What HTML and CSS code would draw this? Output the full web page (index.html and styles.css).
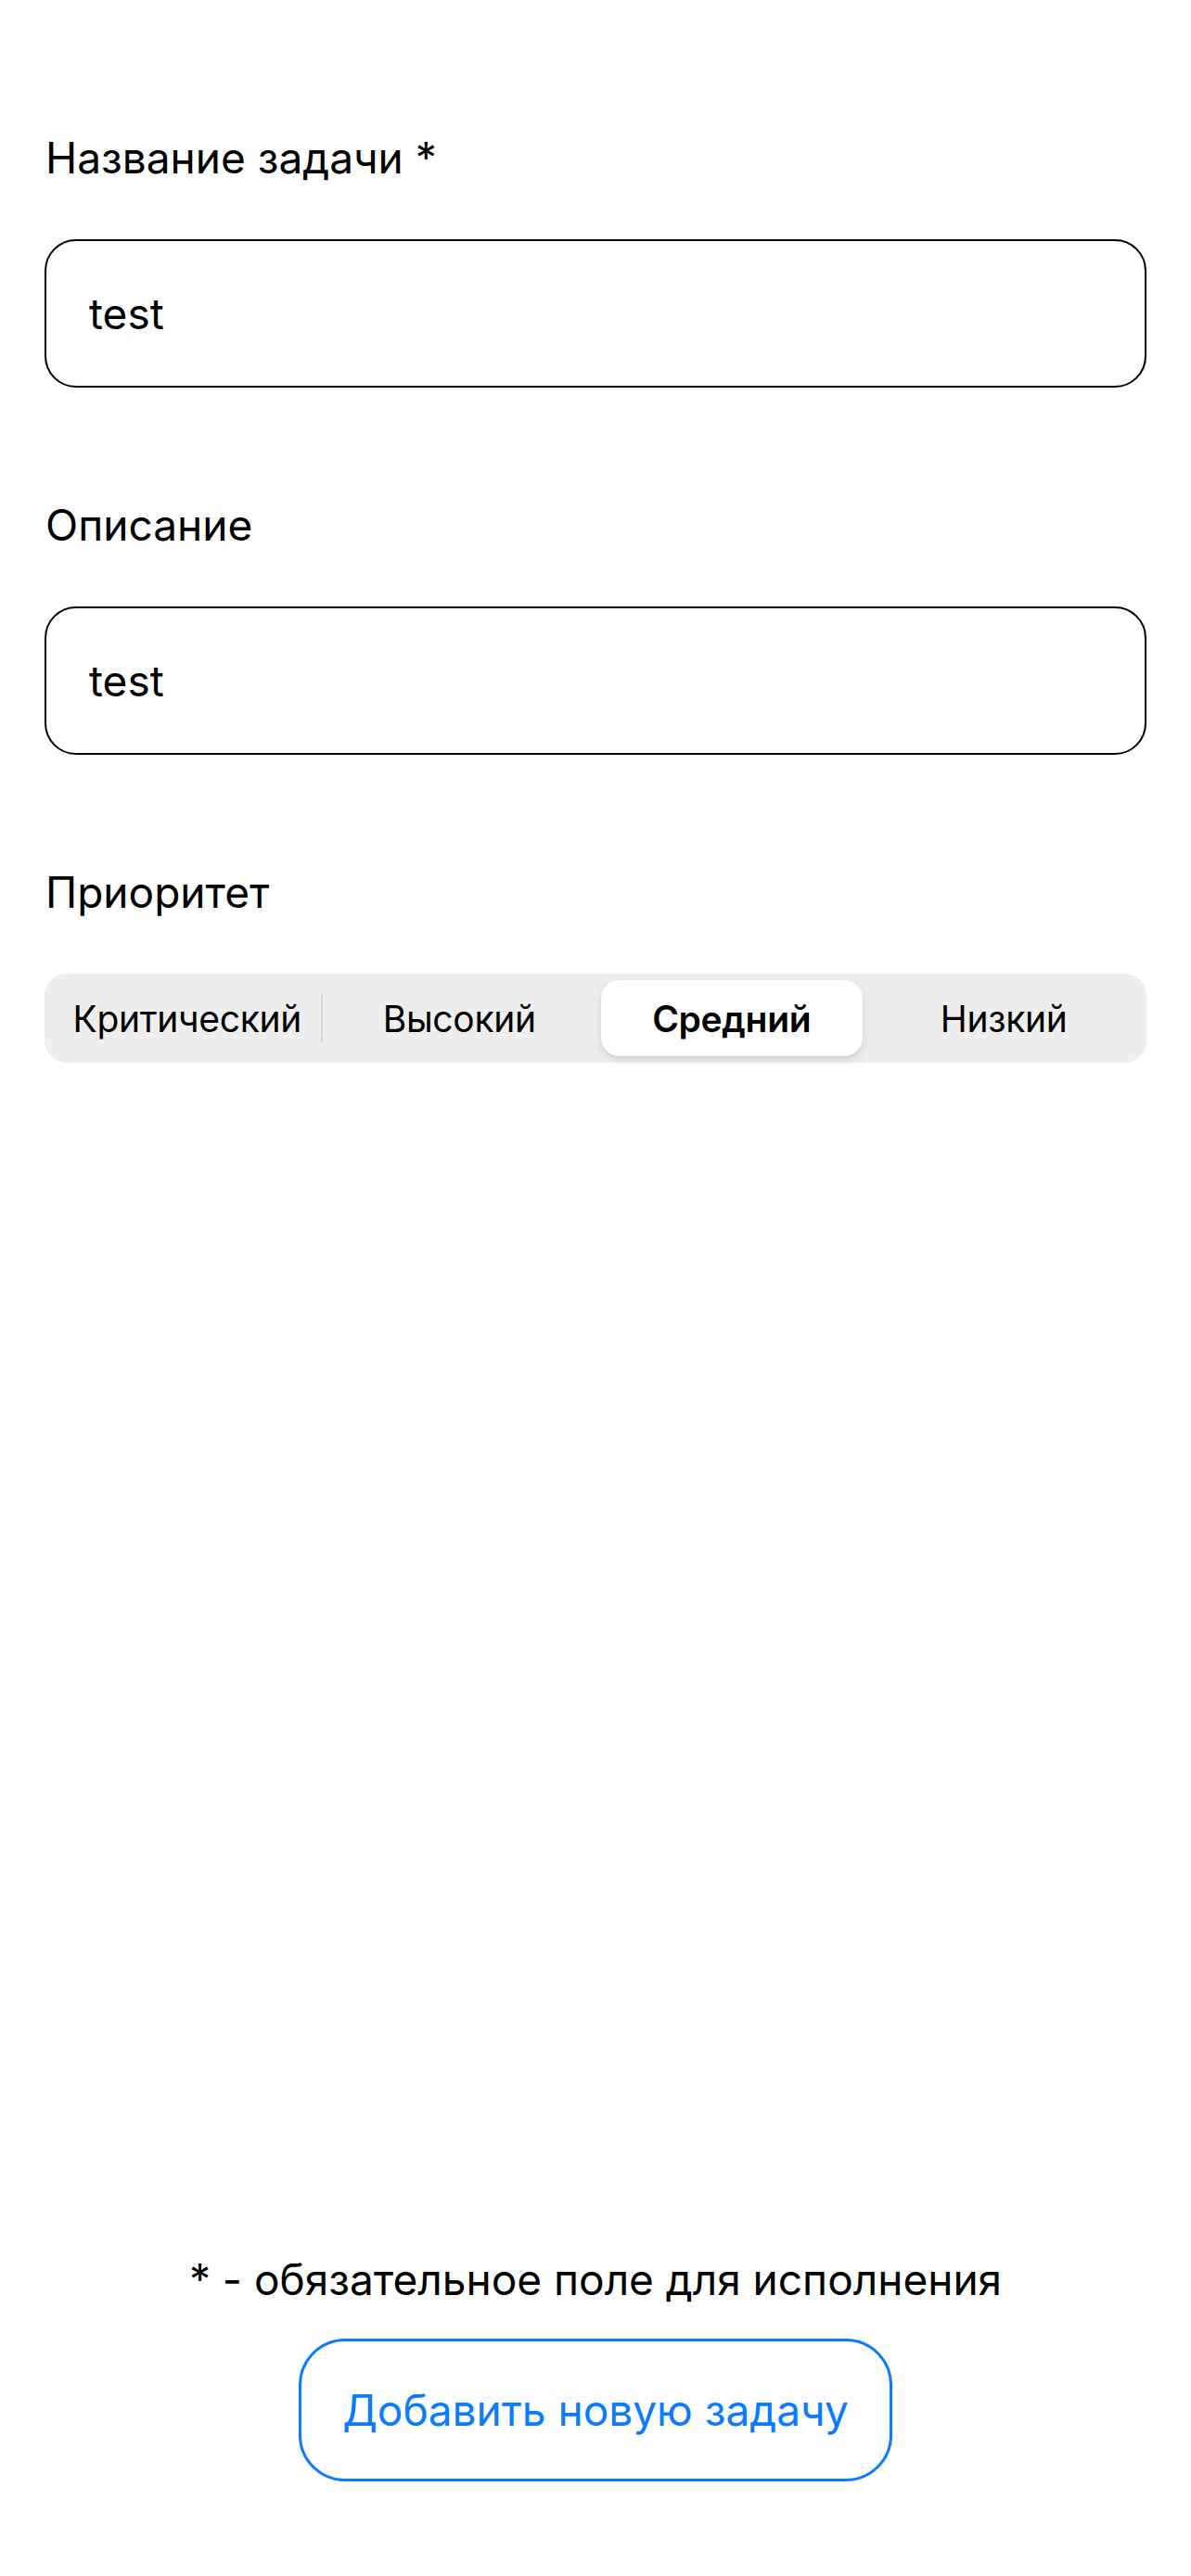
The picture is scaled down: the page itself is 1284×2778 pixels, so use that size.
FILE: index.html
```html
<!DOCTYPE html>
<html lang="ru">
<head>
<meta charset="utf-8">
<title>Новая задача</title>
<link rel="stylesheet" href="styles.css">
</head>
<body>
<div class="page">
  <main class="form">
    <section class="field">
      <label class="label">Название задачи *</label>
      <div class="input">test</div>
    </section>
    <section class="field">
      <label class="label">Описание</label>
      <div class="input">test</div>
    </section>
    <section class="field">
      <label class="label">Приоритет</label>
      <div class="segmented">
        <div class="seg">Критический</div>
        <div class="seg sep-left">Высокий</div>
        <div class="seg selected"><span class="thumb">Средний</span></div>
        <div class="seg">Низкий</div>
      </div>
    </section>
  </main>
  <footer class="footer">
    <p class="note">* - обязательное поле для исполнения</p>
    <button class="add-btn">Добавить новую задачу</button>
  </footer>
</div>
</body>
</html>
```
FILE: styles.css
```css
* { box-sizing: border-box; }
html, body {
  margin: 0;
  padding: 0;
  background: #ffffff;
}
body {
  font-family: "Inter", "Liberation Sans", "Noto Sans", sans-serif;
  color: #000;
}
.page {
  width: 1284px;
  height: 2778px;
  display: flex;
  flex-direction: column;
  padding: 142px 48px 102px;
}
.form {
  display: flex;
  flex-direction: column;
  gap: 120px;
}
.field {
  display: flex;
  flex-direction: column;
  gap: 60px;
}
.label {
  font-size: 46px;
  line-height: 56px;
  height: 56px;
  padding-left: 1px;
}
.input {
  height: 160px;
  border: 2.5px solid #000;
  border-radius: 34px;
  display: flex;
  align-items: center;
  padding-left: 46px;
  font-size: 46px;
  line-height: 56px;
}
.segmented {
  height: 96px;
  background: #eeeeef;
  border-radius: 24px;
  padding: 7px;
  display: grid;
  grid-template-columns: repeat(4, 1fr);
}
.seg {
  position: relative;
  display: flex;
  align-items: center;
  justify-content: center;
  font-size: 39px;
  letter-spacing: -0.3px;
  white-space: nowrap;
}
.sep-left::before {
  content: "";
  position: absolute;
  left: -3px;
  top: 15px;
  bottom: 15px;
  width: 2px;
  background: #d4d4d6;
}
.selected {
  padding: 0 6px;
}
.thumb {
  width: 100%;
  height: 100%;
  background: #fff;
  border-radius: 20px;
  display: flex;
  align-items: center;
  justify-content: center;
  font-weight: 600;
  box-shadow: 0 4px 10px rgba(0,0,0,0.12), 0 2px 2px rgba(0,0,0,0.04);
}
.footer {
  margin-top: auto;
  display: flex;
  flex-direction: column;
  align-items: center;
  gap: 36px;
}
.note {
  margin: 0;
  font-size: 46px;
  line-height: 56px;
}
.add-btn {
  width: 640px;
  height: 154px;
  border: 3px solid #0a7aff;
  border-radius: 50px;
  background: #fff;
  color: #0a7aff;
  font-family: inherit;
  font-size: 46px;
  padding: 0;
}
```
